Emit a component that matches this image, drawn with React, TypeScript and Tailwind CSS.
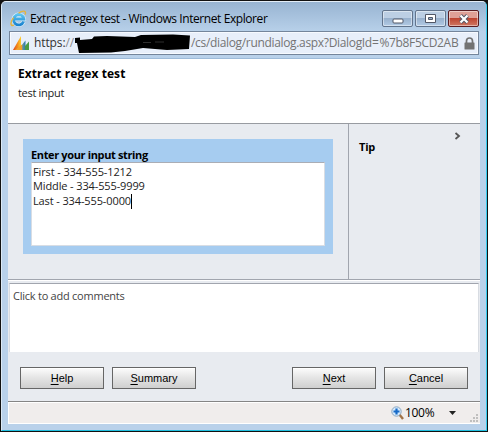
import type { ReactNode } from 'react';

const ui = "font-['Open_Sans','Noto_Sans',sans-serif]";

function IeLogo() {
  return (
    <svg width="17" height="17" viewBox="0 0 17 17" className="shrink-0">
      <defs>
        <linearGradient id="ie" x1="0" y1="0" x2="0" y2="1">
          <stop offset="0" stopColor="#5cc3f0" />
          <stop offset="1" stopColor="#1b84d0" />
        </linearGradient>
      </defs>
      <path d="M13.6 11.6 A5.2 5.2 0 1 1 13.9 9 H5" fill="none" stroke="#dff2fb" strokeWidth="4" />
      <path d="M13.6 11.6 A5.2 5.2 0 1 1 13.9 9 H5" fill="none" stroke="url(#ie)" strokeWidth="2.8" />
      <path d="M4 15 C-.2 17.2 .2 11.5 3.6 7.6 M8.5 3.2 C12.8 .2 16.6 .2 15.2 4.6" fill="none" stroke="#e6b43c" strokeWidth="1.4" />
    </svg>
  );
}

function DynamicsLogo() {
  return (
    <svg width="17" height="15" viewBox="0 0 17 15" className="shrink-0">
      <defs>
        <linearGradient id="sail" x1="0" x2="1">
          <stop offset="0" stopColor="#d9471f" />
          <stop offset=".55" stopColor="#f28a1c" />
          <stop offset="1" stopColor="#ffd02e" />
        </linearGradient>
        <linearGradient id="mid" x1="0" x2="1">
          <stop offset="0" stopColor="#e9a23a" />
          <stop offset=".45" stopColor="#5d93a0" />
          <stop offset="1" stopColor="#2b78b4" />
        </linearGradient>
      </defs>
      <path d="M0 14 L8 0 V14 Z" fill="url(#sail)" />
      <path d="M8 14 V10 L12.5 4.5 V14 Z" fill="url(#mid)" />
      <path d="M12 14 V10 L16 5.5 V14 Z" fill="#4c9b45" />
      <path d="M2 14 Q6 11 9 8.5 V14 Z" fill="#f0a12c" />
    </svg>
  );
}

function WindowButton({ children, close = false }: { children: ReactNode; close?: boolean }) {
  return (
    <div
      className={`flex h-[17px] w-[31px] items-center justify-center rounded-[2px] border shadow-[inset_0_0_0_1px_rgba(255,255,255,0.45)] ${
        close
          ? 'border-[#5a1d22] bg-linear-to-b from-[#dfa096] from-45% via-[#bd4430] via-50% to-[#cf7763]'
          : 'border-[#62748c] bg-linear-to-b from-[#bccfe4] from-45% via-[#98b1cd] via-50% to-[#b2cbe5]'
      }`}
    >
      {children}
    </div>
  );
}

function PushButton({ hotkey, rest }: { hotkey: string; rest: string }) {
  return (
    <button className="h-[22px] w-[84px] border border-[#666] bg-linear-to-b from-[#f8f8f8] from-10% via-[#e4e4e4] via-50% to-[#cfcfcf] text-center font-['Liberation_Sans',Arial,sans-serif] text-[11px] leading-[20px] text-black shadow-[inset_0_1px_0_#fff]">
      <span className="underline underline-offset-2">{hotkey}</span>
      {rest}
    </button>
  );
}

export default function App() {
  return (
    <div className={`flex h-[432px] w-[488px] flex-col overflow-hidden bg-[#111] p-px text-[#111] ${ui}`}>
      <div className="flex h-[430px] w-[486px] flex-col rounded-t-[5px] border border-t-[#e3edf7] border-r-[#35cdf0] border-b-[#20bfdf] border-l-[#dce9f5] bg-[#b9d1ea] px-[6px]">
        <div className="-mx-[6px] flex h-[29px] shrink-0 items-start rounded-t-[4px] bg-linear-to-b from-[#98b4d2] to-[#b7d0e9] pr-[7px] pl-2">
          <div className="mt-2"><IeLogo /></div>
          <div className="mt-[8px] ml-[3px] text-[12px] leading-[17px] tracking-[-0.42px] whitespace-nowrap text-black">
            Extract regex test - Windows Internet Explorer
          </div>
          <div className="mt-2 ml-auto flex gap-[2px]">
            <WindowButton>
              <svg width="12" height="6" viewBox="0 0 12 6" className="mt-1">
                <rect x="1" y="1" width="10" height="4" rx="1" fill="#fff" stroke="#515766" />
              </svg>
            </WindowButton>
            <WindowButton>
              <svg width="11" height="9" viewBox="0 0 11 9">
                <path fillRule="evenodd" d="M.5.5h10v8h-10zM3.5 3.5v2h4v-2z" fill="#fff" stroke="#515766" />
              </svg>
            </WindowButton>
            <WindowButton close>
              <svg width="12" height="10" viewBox="0 0 12 10">
                <path d="M2.5 1.5 9.5 8.5M9.5 1.5 2.5 8.5" stroke="#515766" strokeWidth="4" />
                <path d="M2.5 1.5 9.5 8.5M9.5 1.5 2.5 8.5" stroke="#fff" strokeWidth="2.2" />
              </svg>
            </WindowButton>
          </div>
        </div>

        <div className="mx-px flex h-[24px] shrink-0 items-center border border-[#74859b] bg-[#e8effa] pl-[3px] shadow-[inset_0_0_0_1px_#f7faff]">
          <DynamicsLogo />
          <div className="ml-[4px] w-[41px] text-[12px] leading-[18px] tracking-[-0.1px] text-[#333]">
            https:<span className="text-[#888]">//</span>
          </div>
          <svg width="116" height="19" viewBox="0 0 116 19" className="shrink-0">
            <path d="M0 4 L5 3.5 L5 6 L17 5 L19 2.5 L32 2 L60 3 L66 1 L98 .5 L115 1.5 L114 15 L92 16 L68 14 L50 17 L36 18.5 L4 19 L2 9 L0 9 Z" fill="#000" />
            <path d="M68 8.5h8M80 8h9" stroke="#444" strokeWidth=".7" />
          </svg>
          <div className="text-[12px] leading-[18px] tracking-[-0.33px] whitespace-nowrap text-[#747474]">
            /cs/dialog/rundialog.aspx?DialogId=<span className="ml-px">%7b8F5CD2AB</span>
          </div>
          <svg width="11" height="13" viewBox="0 0 11 13" className="mr-[3px] ml-auto shrink-0">
            <path d="M2.5 6V4a3 3 0 0 1 6 0v2" fill="none" stroke="#737373" strokeWidth="1.7" />
            <rect x=".5" y="5.5" width="10" height="7" rx=".5" fill="#737373" />
          </svg>
        </div>

        <div className="mt-[3px] h-px shrink-0 bg-[#9ebbd9]" />

        <div className="h-[65px] shrink-0 border-b border-[#989ba1] bg-white pl-[10px] text-black">
          <h1 className="pt-[6px] text-[12px] leading-[17px] font-bold tracking-[0.08px]">Extract regex test</h1>
          <p className="mt-[3px] text-[11px] leading-[16px] tracking-[-0.3px] text-[#222]">test input</p>
        </div>

        <div className="flex h-[156px] shrink-0 border-b border-[#a1a5ae] bg-[#e8ebf0]">
          <div className="w-[340px] pt-[15px] pl-[15px]">
            <div className="h-[115px] w-[310px] bg-[#a6ccf0] px-2 pt-[8px]">
              <h2 className="h-[15px] text-[11px] leading-[16px] font-bold tracking-[-0.36px] whitespace-nowrap text-black">Enter your input string</h2>
              <div className="h-[84px] w-[294px] border border-t-[#aaadb5] border-r-[#d8dde4] border-b-[#d8dde4] border-l-[#d8dde4] bg-white pt-[2px] pl-px text-[11px] leading-[14.4px] tracking-[-0.12px] text-[#222]">
                <div>First - 334-555-1212</div>
                <div>Middle - 334-555-9999</div>
                <div className="flex items-center">Last - 334-555-0000<span className="h-[15px] w-px bg-black" /></div>
              </div>
            </div>
          </div>
          <div className="relative flex-1 border-l border-[#a1a5ae] pt-[15px] pl-[10px]">
            <h2 className="text-[11px] leading-[16px] font-bold tracking-[-0.2px] text-black">Tip</h2>
            <svg width="7" height="8" viewBox="0 0 7 8" className="absolute top-2 right-[19px]">
              <path d="m1.5 1 3.5 3-3.5 3" fill="none" stroke="#555" strokeWidth="1.8" />
            </svg>
          </div>
        </div>

        <div className="h-[72px] shrink-0 border-t border-white bg-[#e8ebf0] px-px pt-[2px]">
          <div className="h-[69px] border-x border-t border-x-[#d8dce2] border-t-[#a1a5ae] bg-white pt-[3px] pl-[3px] text-[11px] leading-[17px] tracking-[-0.24px] text-[#444]">
            Click to add comments
          </div>
        </div>

        <div className="flex h-[50px] shrink-0 gap-2 border-b border-[#858585] bg-[#e8ebf0] px-3 pt-[15px]">
          <PushButton hotkey="H" rest="elp" />
          <PushButton hotkey="S" rest="ummary" />
          <div className="flex-1" />
          <PushButton hotkey="N" rest="ext" />
          <PushButton hotkey="C" rest="ancel" />
        </div>

        <div className="flex h-[22px] shrink-0 items-center border border-r-0 border-white bg-[#f0edec] pl-[382px]">
          <svg width="13" height="14" viewBox="0 0 13 14" className="shrink-0">
            <path d="m8 8 4 5" stroke="#a17448" strokeWidth="2.4" />
            <circle cx="5.5" cy="5.5" r="4.7" fill="#d5eafd" stroke="#8ba6bf" />
            <path d="M5.5 2.5v6M2.5 5.5h6" stroke="#176ac7" strokeWidth="2.2" />
          </svg>
          <span className="ml-px w-[44px] text-[12px] leading-[18px] tracking-[-0.3px] text-black">100%</span>
          <svg width="8" height="4" viewBox="0 0 8 4"><path d="M0 0h7L3.5 4z" fill="#222" /></svg>
          <svg width="9" height="9" viewBox="0 0 9 9" className="mt-auto mr-px ml-auto" fill="#c0bfbe">
            <path d="M6 0h2v2H6zM3 3h2v2H3zM6 3h2v2H6zM0 6h2v2H0zM3 6h2v2H3zM6 6h2v2H6z" />
          </svg>
        </div>
      </div>
    </div>
  );
}
